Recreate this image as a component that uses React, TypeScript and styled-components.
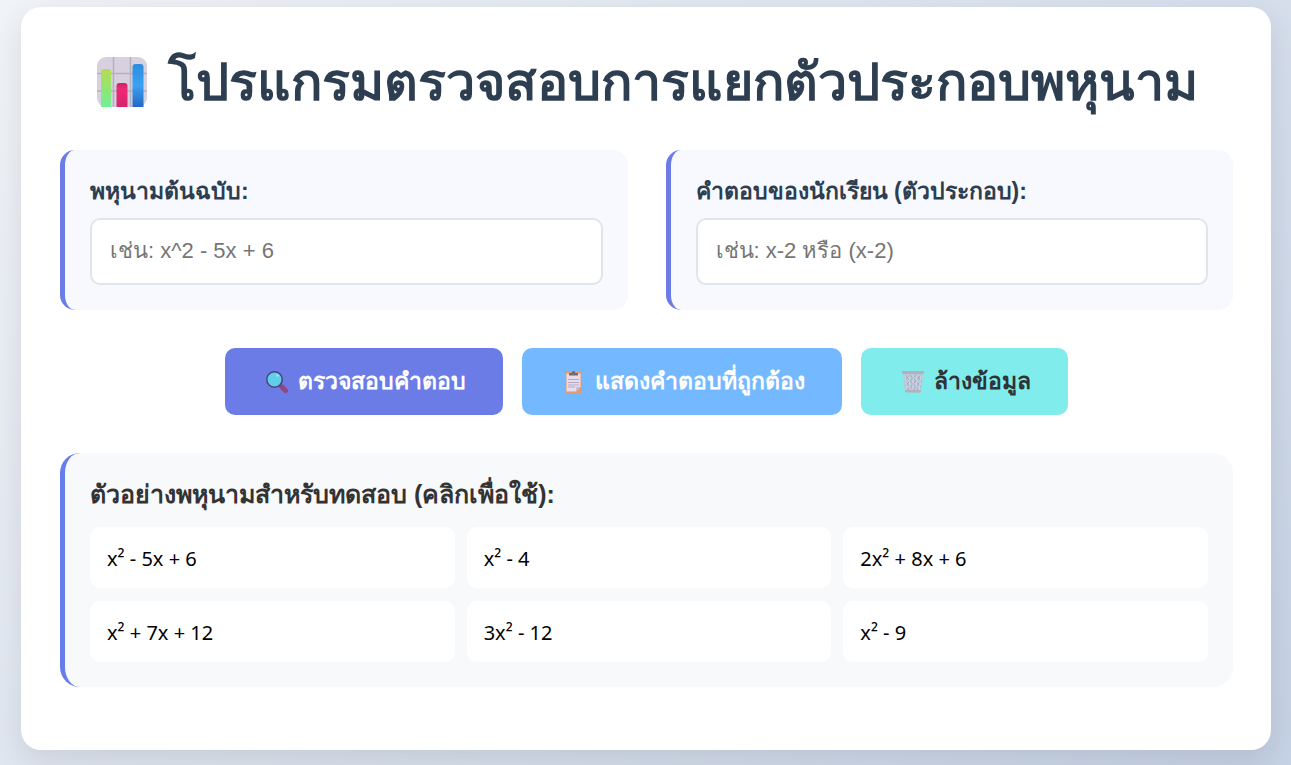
import React, { useState } from "react";
import styled, { createGlobalStyle } from "styled-components";

const GlobalStyle = createGlobalStyle`
  * { box-sizing: border-box; }
  body {
    margin: 0;
    font-family: "Liberation Sans", sans-serif;
    color: #333;
  }
`;

const Page = styled.div`
  min-height: 100vh;
  padding: 7px 20px 15px 21px;
  background: linear-gradient(135deg, #f0f3f7 0%, #c5d1e4 100%);
`;

const Card = styled.main`
  display: flex;
  flex-direction: column;
  gap: 38px;
  padding: 45px 38px 63px 39px;
  background: #fff;
  border-radius: 20px;
  box-shadow: 0 10px 30px rgba(0, 0, 0, 0.1);
`;

const Title = styled.h1`
  display: flex;
  align-items: center;
  justify-content: center;
  gap: 20px;
  height: 60px;
  margin: 0;
  color: #2c3e50;
  font-size: 52px;
  font-weight: 700;
  line-height: 60px;
  white-space: nowrap;
`;

const Fields = styled.div`
  display: grid;
  grid-template-columns: 1fr 1fr;
  gap: 38px;
`;

const Field = styled.div`
  display: flex;
  flex-direction: column;
  gap: 10px;
  padding: 25px;
  background: #f8f9fe;
  border-left: 5px solid #6c7ce7;
  border-radius: 15px;
`;

const Label = styled.label`
  color: #2c3e50;
  font-size: 23px;
  font-weight: 600;
  line-height: 33px;
`;

const Input = styled.input`
  width: 100%;
  padding: 17px 18px 19px;
  color: #333;
  background: #fff;
  border: 2px solid #dfe6e9;
  border-radius: 10px;
  font-family: "Liberation Sans", sans-serif;
  font-size: 22px;
  line-height: 27px;
  &::placeholder { color: #757575; opacity: 1; }
`;

const Actions = styled.div`
  display: flex;
  justify-content: center;
  gap: 19px;
`;

const Button = styled.button<{ $bg: string; $fg: string }>`
  display: flex;
  align-items: center;
  gap: 9px;
  padding: 17px 37px 17px 40px;
  color: ${(p) => p.$fg};
  background: ${(p) => p.$bg};
  border: 0;
  border-radius: 10px;
  font-family: inherit;
  font-size: 23px;
  font-weight: 700;
  line-height: 33px;
  white-space: nowrap;
  cursor: pointer;
`;

const Examples = styled.section`
  padding: 25px;
  background: #f8f9fb;
  border-left: 5px solid #667eea;
  border-radius: 20px;
`;

const ExamplesTitle = styled.h2`
  margin: 0 0 16px;
  font-size: 25px;
  font-weight: 700;
  line-height: 33px;
`;

const ExampleGrid = styled.div`
  display: grid;
  grid-template-columns: repeat(3, 1fr);
  gap: 13px 12px;
`;

const Example = styled.button`
  padding: 18px 17px 16px;
  color: #000;
  background: #fff;
  border: 0;
  border-radius: 10px;
  font-family: "Noto Sans", sans-serif;
  font-size: 20px;
  line-height: 27px;
  text-align: left;
  cursor: pointer;
`;

const ChartIcon = () => (
  <svg width="52" height="52" viewBox="0 0 52 52" aria-hidden="true">
    <defs>
      <linearGradient id="green" x1="0" y1="0" x2="0" y2="1">
        <stop offset="0" stopColor="#b4dc50" />
        <stop offset="1" stopColor="#6ef095" />
      </linearGradient>
      <linearGradient id="pink" x1="0" y1="0" x2="0" y2="1">
        <stop offset="0" stopColor="#c5285d" />
        <stop offset="0.25" stopColor="#f02878" />
        <stop offset="1" stopColor="#d5246d" />
      </linearGradient>
      <linearGradient id="blue" x1="0" y1="0" x2="0" y2="1">
        <stop offset="0" stopColor="#2b8ce0" />
        <stop offset="0.5" stopColor="#3ba1f2" />
        <stop offset="1" stopColor="#2368c4" />
      </linearGradient>
    </defs>
    <rect x="1" y="1" width="50" height="50" rx="9" fill="#d8d0df" />
    <path d="M17.500 1V51M34.500 1V51M1 17.500H51M1 35H51" stroke="#b5afbd" strokeWidth="1.500" />
    <path d="M5 51V16Q5 13 8 13H12Q15 13 15 16V51Z" fill="url(#green)" />
    <path d="M20.500 51V30Q20.500 27 23.500 27H28.500Q31.500 27 31.500 30V51Z" fill="url(#pink)" />
    <path d="M36.500 51V11Q36.500 8 39.500 8H44.500Q47.500 8 47.500 11V51Z" fill="url(#blue)" />
  </svg>
);

const SearchIcon = () => (
  <svg width="24" height="24" viewBox="0 0 24 24" aria-hidden="true">
    <path d="M14.500 15.500L18 18" stroke="#4e3b69" strokeWidth="2.500" />
    <path d="M17 17L20.500 20.500" stroke="#8b4a80" strokeWidth="5" strokeLinecap="round" />
    <circle cx="9.500" cy="9.500" r="7.700" fill="#62cceb" stroke="#48457b" strokeWidth="1.500" />
    <circle cx="12.500" cy="5.500" r="1.300" fill="#a6e7f5" />
  </svg>
);

const ClipboardIcon = () => (
  <svg width="24" height="24" viewBox="0 0 24 24" aria-hidden="true">
    <rect x="3" y="2" width="17" height="21" rx="1" fill="#e19a6c" />
    <path d="M4.500 3.500H18.500V17L14 21.500H4.500Z" fill="#e6dcec" />
    <path d="M14 21.500V17H18.500Z" fill="#cbb9d3" />
    <path d="M6 9.500H17M6 12.500H17M6 15H17M6 17H13" stroke="#b6a9c3" strokeWidth="1" />
    <path d="M7 5.500V3H9.500Q10 1 11.500 1T13.500 3H16V5.500Z" fill="#716b79" />
  </svg>
);

const TrashIcon = () => (
  <svg width="24" height="24" viewBox="0 0 24 24" aria-hidden="true">
    <path d="M2 3H22L20 22H4Z" fill="#b8c9d8" />
    <path d="M4 5L18 21M9 5L20 17M15 5L21 12M4 11L13 21M5 17L9 21M20 5L6 21M15 5L4 16M9 5L4 10M20 11L12 21" stroke="#9bacbf" strokeWidth="1" />
    <path d="M4 5L6 21M8 5L9 21M12 5V21M16 5L15 21M20 5L18 21" stroke="#d8d3e4" strokeWidth="1" />
    <rect x="1" y="1" width="22" height="3" rx="1" fill="#b9aebb" />
    <rect x="4" y="20" width="16" height="2.500" rx="1" fill="#b9aebb" />
  </svg>
);

const examples = [
  { label: "x² - 5x + 6", value: "x^2 - 5x + 6" },
  { label: "x² - 4", value: "x^2 - 4" },
  { label: "2x² + 8x + 6", value: "2x^2 + 8x + 6" },
  { label: "x² + 7x + 12", value: "x^2 + 7x + 12" },
  { label: "3x² - 12", value: "3x^2 - 12" },
  { label: "x² - 9", value: "x^2 - 9" },
];

export default function App() {
  const [polynomial, setPolynomial] = useState("");
  const [answer, setAnswer] = useState("");
  const clear = () => {
    setPolynomial("");
    setAnswer("");
  };

  return (
    <>
      <GlobalStyle />
      <Page>
        <Card>
          <Title>
            <ChartIcon />
            <span>โปรแกรมตรวจสอบการแยกตัวประกอบพหุนาม</span>
          </Title>
          <Fields>
            <Field>
              <Label htmlFor="polynomial">พหุนามต้นฉบับ:</Label>
              <Input id="polynomial" placeholder="เช่น: x^2 - 5x + 6" value={polynomial} onChange={(e) => setPolynomial(e.target.value)} />
            </Field>
            <Field>
              <Label htmlFor="answer">คำตอบของนักเรียน (ตัวประกอบ):</Label>
              <Input id="answer" placeholder="เช่น: x-2 หรือ (x-2)" value={answer} onChange={(e) => setAnswer(e.target.value)} />
            </Field>
          </Fields>
          <Actions>
            <Button type="button" $bg="#6c7ce7" $fg="#fff"><SearchIcon />ตรวจสอบคำตอบ</Button>
            <Button type="button" $bg="#74b9ff" $fg="#fff"><ClipboardIcon />แสดงคำตอบที่ถูกต้อง</Button>
            <Button type="button" $bg="#81ecec" $fg="#2d3436" onClick={clear}><TrashIcon />ล้างข้อมูล</Button>
          </Actions>
          <Examples>
            <ExamplesTitle>ตัวอย่างพหุนามสำหรับทดสอบ (คลิกเพื่อใช้):</ExamplesTitle>
            <ExampleGrid>
              {examples.map((item) => (
                <Example type="button" key={item.value} onClick={() => setPolynomial(item.value)}>{item.label}</Example>
              ))}
            </ExampleGrid>
          </Examples>
        </Card>
      </Page>
    </>
  );
}
